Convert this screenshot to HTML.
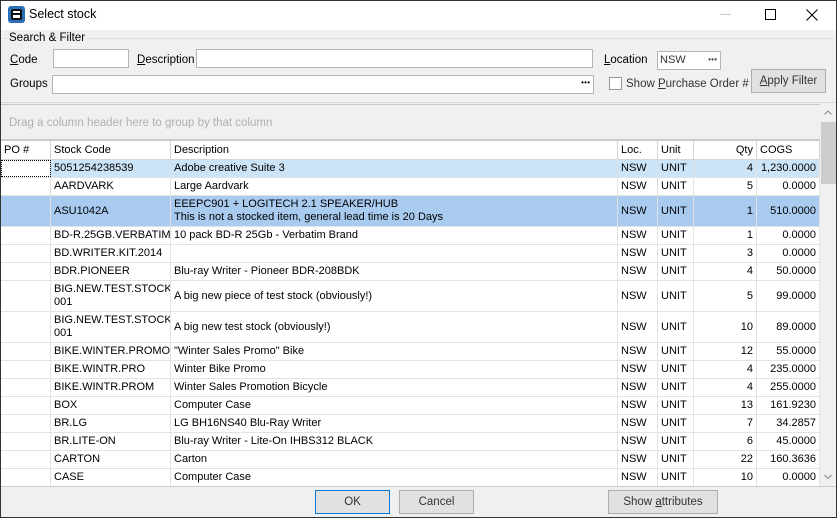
<!DOCTYPE html>
<html><head><style>
*{box-sizing:border-box;margin:0;padding:0}
body{width:837px;height:518px;overflow:hidden;font-family:"Liberation Sans",sans-serif;font-size:11px;color:#000;background:#fff;position:relative}
.a{position:absolute}
.win{position:absolute;left:0;top:0;width:837px;height:518px;border:1px solid #333}
.inp{position:absolute;background:#fff;border:1px solid #b4b4b4;height:19px}
.btn{position:absolute;background:#e1e1e1;border:1px solid #adadad;text-align:center;line-height:22px;height:24px;font-size:11.5px}
.row{position:absolute;left:1px;width:819px;border-bottom:1px solid #e2e2e2}
.c{position:absolute;top:0;bottom:0;border-right:1px solid #e2e2e2;padding-left:3px;display:flex;align-items:center;white-space:nowrap;overflow:hidden;line-height:13px}
.r{justify-content:flex-end;padding-right:3px;padding-left:0}
.hd .c{background:#fff;border-right:1px solid #d5d5d5}
</style></head><body>
<div class="win"></div>
<div class="a" style="left:8px;top:6px;width:17px;height:17px;background:#2b6fb5;border-radius:3px"></div>
<div class="a" style="left:11px;top:9px;width:11px;height:11px;border:2px solid #111;border-radius:2px;background:#fff"></div>
<div class="a" style="left:11px;top:13px;width:9px;height:2px;background:#111"></div>
<div class="a" style="left:29px;top:7px;font-size:12.5px">Select stock</div>
<div class="a" style="left:720px;top:14px;width:11px;height:1px;background:#ccc"></div>
<div class="a" style="left:765px;top:9px;width:11px;height:11px;border:1px solid #000"></div>
<svg class="a" style="left:806px;top:9px" width="12" height="12"><path d="M0.5 0.5L11.5 11.5M11.5 0.5L0.5 11.5" stroke="#000" stroke-width="1.1"/></svg>
<div class="a" style="left:1px;top:30px;width:835px;height:74px;background:#f0f0f0"></div>
<div class="a" style="left:3px;top:38px;width:831px;height:1px;background:#dcdcdc"></div>
<div class="a" style="left:7px;top:32px;background:#f0f0f0;padding:0 2px;font-size:11.5px">Search &amp; Filter</div>
<div class="a" style="left:10px;top:54px;font-size:11.5px"><u>C</u>ode</div>
<div class="inp" style="left:53px;top:49px;width:76px"></div>
<div class="a" style="left:137px;top:54px;font-size:11.5px"><u>D</u>escription</div>
<div class="inp" style="left:196px;top:49px;width:397px"></div>
<div class="a" style="left:604px;top:54px;font-size:11.5px"><u>L</u>ocation</div>
<div class="inp" style="left:657px;top:51px;width:64px;padding-left:2px;line-height:16px;color:#333">NSW<span style="position:absolute;right:4px;top:0px;font-size:8px;letter-spacing:-1px">• • •</span></div>
<div class="a" style="left:10px;top:78px;font-size:11.5px">Groups</div>
<div class="inp" style="left:52px;top:75px;width:542px"><span style="position:absolute;right:4px;top:2px;font-size:8px;letter-spacing:-1px">• • •</span></div>
<div class="a" style="left:609px;top:77px;width:13px;height:13px;border:1px solid #999;background:#fff"></div>
<div class="a" style="left:626px;top:78px;color:#333;font-size:11.5px">Show <u>P</u>urchase Order #</div>
<div class="btn" style="left:751px;top:69px;width:75px;color:#333"><u>A</u>pply Filter</div>
<div class="a" style="left:1px;top:102px;width:835px;height:1px;background:#d8d8d8"></div>
<div class="a" style="left:1px;top:104px;width:819px;height:36px;background:#f0f0f0;border-top:1px solid #c8c8c8"></div>
<div class="a" style="left:9px;top:117px;color:#b0b0b0;font-size:11.5px">Drag a column header here to group by that column</div>
<div class="a" style="left:1px;top:139px;width:819px;height:2px;background:#ccc"></div>
<div class="a" style="left:820px;top:104px;width:16px;height:382px;background:#f0f0f0"></div>
<div class="a" style="left:821px;top:122px;width:15px;height:62px;background:#cdcdcd"></div>
<svg class="a" style="left:824px;top:110px" width="8" height="6"><path d="M0.5 4.5L4 1L7.5 4.5" stroke="#888" fill="none"/></svg>
<svg class="a" style="left:824px;top:474px" width="8" height="6"><path d="M0.5 1L4 4.5L7.5 1" stroke="#888" fill="none"/></svg>
<div id="g"></div>
<div class="a" style="left:1px;top:486px;width:835px;height:31px;background:#f0f0f0;border-top:1px solid #ccc"></div>
<div class="btn" style="left:315px;top:490px;width:75px;border-color:#0078d7;color:#333">OK</div>
<div class="btn" style="left:399px;top:490px;width:75px;color:#333">Cancel</div>
<div class="btn" style="left:608px;top:490px;width:110px;color:#333">Show <u>a</u>ttributes</div>
<script>
const cols=[[0,50],[50,170],[170,617],[617,657],[657,693],[693,756],[756,819]];
const rows=[
["5051254238539","Adobe creative Suite 3","4","1,230.0000",18,1],
["AARDVARK","Large Aardvark","5","0.0000",18],
["ASU1042A","EEEPC901 + LOGITECH 2.1 SPEAKER/HUB<br>This is not a stocked item, general lead time is 20 Days","1","510.0000",31,2],
["BD-R.25GB.VERBATIM","10 pack BD-R 25Gb - Verbatim Brand","1","0.0000",18],
["BD.WRITER.KIT.2014","","3","0.0000",18],
["BDR.PIONEER","Blu-ray Writer - Pioneer BDR-208BDK","4","50.0000",18],
["BIG.NEW.TEST.STOCK.<br>001","A big new piece of test stock (obviously!)","5","99.0000",31],
["BIG.NEW.TEST.STOCK.<br>001","A big new test stock (obviously!)","10","89.0000",31],
["BIKE.WINTER.PROMO","\"Winter Sales Promo\" Bike","12","55.0000",18],
["BIKE.WINTR.PRO","Winter Bike Promo","4","235.0000",18],
["BIKE.WINTR.PROM","Winter Sales Promotion Bicycle","4","255.0000",18],
["BOX","Computer Case","13","161.9230",18],
["BR.LG","LG BH16NS40 Blu-Ray Writer","7","34.2857",18],
["BR.LITE-ON","Blu-ray Writer - Lite-On IHBS312 BLACK","6","45.0000",18],
["CARTON","Carton","22","160.3636",18],
["CASE","Computer Case","10","0.0000",18]];
let h='<div class="row hd" style="top:141px;height:19px;border-bottom:1px solid #d5d5d5">';
const hd=["PO #","Stock Code","Description","Loc.","Unit","Qty","COGS"];
hd.forEach((t,i)=>{h+=`<div class="c${i==5?' r':''}" style="left:${cols[i][0]}px;width:${cols[i][1]-cols[i][0]}px">${t}</div>`});
h+='</div>';
let y=160;
rows.forEach(r=>{
 const bg=r[5]==1?'#cce4f7':r[5]==2?'#a9cbf0':'#fff';
 h+=`<div class="row" style="top:${y}px;height:${r[4]}px;background:${bg}">`;
 const v=["",r[0],r[1],"NSW","UNIT",r[2],r[3]];
 v.forEach((t,i)=>{let st=`left:${cols[i][0]}px;width:${cols[i][1]-cols[i][0]}px;`;
  if(r[5]==1&&i==0)st+='background:#fff;outline:1px dotted #000;outline-offset:-1px;';
  h+=`<div class="c${i>=5?' r':''}" style="${st}">${t}</div>`});
 h+='</div>';y+=r[4];
});
document.getElementById('g').innerHTML=h;
</script>
</body></html>
